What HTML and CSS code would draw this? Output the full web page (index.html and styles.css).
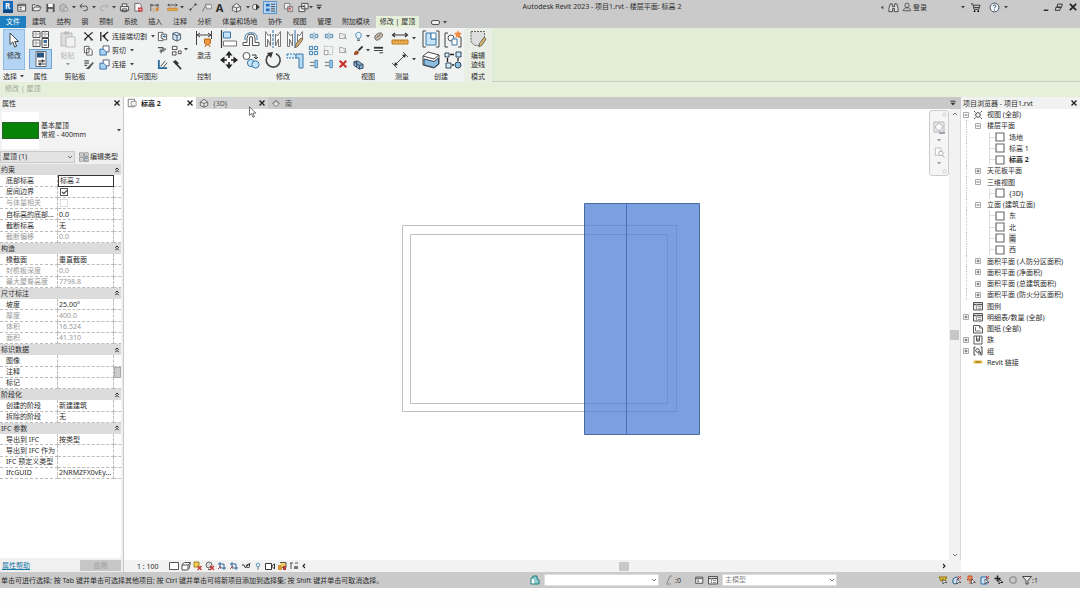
FILE: index.html
```html
<!DOCTYPE html>
<html lang="zh-CN">
<head>
<meta charset="utf-8">
<title>Autodesk Revit 2023 - 项目1.rvt</title>
<link rel="stylesheet" href="styles.css">
</head>
<body>
<svg class="defs" aria-hidden="true">
  <symbol id="tri" viewBox="0 0 4 3"><path d="M0 0h4L2 2.6z" fill="#444"/></symbol>
  <symbol id="x" viewBox="0 0 8 8"><path d="M1.5 1.5l5 5m0-5l-5 5" stroke="#222" stroke-width="1.4" fill="none"/></symbol>
  <symbol id="chev" viewBox="0 0 6 6"><path d="M1 2l2 2 2-2" stroke="#555" stroke-width=".8" fill="none"/></symbol>
  <symbol id="chevr" viewBox="0 0 6 6"><path d="M2 1l2 2-2 2" stroke="#222" stroke-width="1.1" fill="none"/></symbol>
  <symbol id="dbl" viewBox="0 0 6 6"><path d="M1.3 2.8L3 1l1.7 1.8M1.3 5.2L3 3.4l1.7 1.8" stroke="#222" stroke-width="1" fill="none"/></symbol>
  <symbol id="menu" viewBox="0 0 6 6"><path d="M.5 1.2h5" stroke="#333"/><path d="M.5 2.8h5L3 5.5z" fill="#333"/></symbol>
  <symbol id="win" viewBox="0 0 12 12"><path d="M2 2.5h8.500v7.500H2zM2 4h8.500M4 6h2M4 8h2" stroke="#444" fill="#eee"/></symbol>
  <symbol id="open" viewBox="0 0 12 12"><path d="M1.500 9.500V3h3l1 1h3.500v1.500M1.500 9.500l2-4h7.500l-2 4z" stroke="#444" fill="#eee" stroke-width=".9"/></symbol>
  <symbol id="save" viewBox="0 0 12 12"><path d="M1.500 2h9v9h-9z" fill="#555"/><path d="M3.500 2h5v3.500h-5z" fill="#fff"/><path d="M3.500 7.500h5V11h-5z" fill="#ccc"/></symbol>
  <symbol id="sync" viewBox="0 0 12 12"><path d="M2 4l4-2 3 2v4l-4 2.500L2 9z" stroke="#999" fill="#bbb"/><circle cx="8.500" cy="8" r="2.300" fill="#ccc" stroke="#999"/></symbol>
  <symbol id="undo" viewBox="0 0 12 12"><path d="M4.500 2L2 4.500 4.500 7M2.200 4.500H8a2.400 2.400 0 010 5H6" stroke="#444" fill="none"/></symbol>
  <symbol id="redo" viewBox="0 0 12 12"><path d="M7.500 2L10 4.500 7.500 7M9.800 4.500H4a2.400 2.400 0 000 5h2" stroke="#aaa" fill="none"/></symbol>
  <symbol id="print" viewBox="0 0 12 12"><path d="M3.500 5V2h5v3M1.500 5h9v4.500h-9zM3.500 7.500h5v3h-5z" stroke="#444" fill="#f4f4f4"/></symbol>
  <symbol id="pdf" viewBox="0 0 12 12"><path d="M2 1.500h5l2 2V10H2z" stroke="#666" fill="#f4f4f4"/><path d="M5.500 6h5v4.500h-5z" fill="#c44"/><path d="M7 8.200h2" stroke="#fff"/></symbol>
  <symbol id="dimq" viewBox="0 0 12 12"><path d="M2 2v8M10 2v4M2 3.500h8M4 2.500l-2 1 2 1M8 2.500l2 1-2 1" stroke="#555" stroke-width=".9" fill="none"/><path d="M7 6h3.500v3L8 11z" fill="#d78a3a"/><path d="M4 7l2 2-2 2" stroke="#d78a3a" fill="none"/></symbol>
  <symbol id="ruler" viewBox="0 0 18 18"><path d="M1 5h16M4 3L1.500 5 4 7M14 3l2.500 2L14 7" stroke="#333" fill="none" stroke-width="1.200"/><path d="M1 10h16v4H1z" fill="#f0b050" stroke="#b87a20"/><path d="M4 10v2m3-2v2m3-2v2m3-2v2" stroke="#a06a1c" stroke-width=".7"/></symbol>
  <symbol id="diag" viewBox="0 0 18 18"><path d="M3 15L15 3" stroke="#444"/><path d="M1 12l5 5M12 1l5 5" stroke="#555"/><path d="M3 15l1-4 3 3zM15 3l-4 1 3 3z" fill="#333"/></symbol>
  <symbol id="tag" viewBox="0 0 12 12"><path d="M1.500 10.500L5 4" stroke="#777"/><path d="M5 2.500h4.500a2 2 0 010 5H6z" stroke="#777" fill="#e8e8e8"/></symbol>
  <symbol id="house" viewBox="0 0 12 12"><path d="M1.500 5L6 1.500 10.500 5v4L6 11 1.500 9z" stroke="#555" fill="#e8e8e8"/><path d="M1.500 5L6 6.500 10.500 5M6 6.500V11" stroke="#555" fill="none"/></symbol>
  <symbol id="elev" viewBox="0 0 12 12"><path d="M1 7l5-4.500L11 7z" fill="#777"/><circle cx="6" cy="7" r="2.800" fill="#e8e8e8" stroke="#777"/></symbol>
  <symbol id="plan" viewBox="0 0 12 12"><path d="M1.500 1.500h7.500v9H1.500z" fill="#fff" stroke="#666"/><path d="M5 4h6v5.500H5z" fill="#f4f4f4" stroke="#888"/></symbol>
  <symbol id="sect" viewBox="0 0 12 12"><circle cx="5" cy="6" r="3.200" fill="#eee" stroke="#555"/><path d="M6 2l4.500 4L6 10z" fill="#333"/></symbol>
  <symbol id="thin" viewBox="0 0 12 12"><path d="M1 2h4v3H1zM1 7h4v3H1z" fill="#2d6fb5"/><path d="M6.500 2.500H11M6.500 5H11M6.500 7.500H11M6.500 10H11" stroke="#333" stroke-width=".9"/></symbol>
  <symbol id="closew" viewBox="0 0 12 12"><path d="M1.500 1.500h6v6h-6zM5 5h5.500v5.500H5z" stroke="#777" fill="#eee"/><path d="M5.500 6l4 4m0-4l-4 4" stroke="#c44"/></symbol>
  <symbol id="switch" viewBox="0 0 12 12"><path d="M4 1.500h7v6H4zM1 5h6.500v5.500H1z" stroke="#444" fill="#eee"/><path d="M5 5l3-2" stroke="#444"/></symbol>
  <symbol id="bino" viewBox="0 0 12 12"><path d="M2.500 2h2.200v3h2.600V2h2.200L11 7v3.500H7V7H5v3.500H1V7z" stroke="#333" fill="#ddd" stroke-width=".9"/></symbol>
  <symbol id="user" viewBox="0 0 12 12"><circle cx="6" cy="4" r="2.600" stroke="#444" fill="none"/><path d="M1.500 10.500c.500-3 2-3.500 4.500-3.500s4 .5 4.500 3.500z" stroke="#444" fill="none"/></symbol>
  <symbol id="cart" viewBox="0 0 12 12"><path d="M1 2h2l1.500 6h5L11 3.500H3.500M4.500 6h5.500" stroke="#333" fill="none"/><circle cx="5" cy="10" r="1"/><circle cx="9" cy="10" r="1"/></symbol>
  <symbol id="help" viewBox="0 0 12 12"><circle cx="6" cy="6" r="4.800" fill="#f2f7fb" stroke="#345"/><path d="M4.500 4.600c.2-2 3.200-1.700 3 0C7.300 5.700 6 5.700 6 7M6 8.300v1" stroke="#246" fill="none"/></symbol>
  <symbol id="min" viewBox="0 0 12 12"><path d="M3 9h5" stroke="#222" stroke-width="1.500"/></symbol>
  <symbol id="rest" viewBox="0 0 12 12"><path d="M4.500 2.500H10l-1 4H3.500zM2.500 6H8l-1 4H1.500z" stroke="#222" fill="#ccc"/></symbol>
  <symbol id="arrow" viewBox="0 0 12 16"><path d="M2 1v11.500l2.800-2.600L6.700 15l2-.8-2-4.700H10.500z" fill="#fff" stroke="#444"/></symbol>
  <symbol id="props" viewBox="0 0 18 18"><path d="M1 1.500h7v6H1zM10 1.500h6.500v6H10zM1 10h7v6.500H1z" stroke="#555" fill="#f8f8f8"/><path d="M1 4h7M4 1.500v6M10 4h6M13 1.500v6M1 13h7M4 10v6" stroke="#aaa"/><path d="M10 8.500h6.500v9H10z" fill="#fff" stroke="#444"/><path d="M11.500 10h3.500v3h-3.500z" fill="#3c6b9e"/><path d="M11.500 15h3.500" stroke="#444"/></symbol>
  <symbol id="panel" viewBox="0 0 18 18"><path d="M4 1.500h10v15H4z" stroke="#667" fill="#fff"/><path d="M5 2.500h7v5H5z" fill="#28557f"/><path d="M6 11h7M6 14h7" stroke="#333"/><path d="M10.500 9.500v3M8 12.500v3" stroke="#333" stroke-width="1.500"/></symbol>
  <symbol id="paste" viewBox="0 0 18 18"><path d="M2 3h11v13H2z" fill="#ddd" stroke="#bbb"/><path d="M5 1.500h5v3H5z" fill="#bbb"/><path d="M7 7h9v10H7z" fill="#f2f2f2" stroke="#bbb"/></symbol>
  <symbol id="cut" viewBox="0 0 12 12"><path d="M2 2l7.500 7M9.500 2L2 9" stroke="#222" stroke-width="1.300"/><path d="M1 9.500h2.500M8 9.500h3M1 2h2M9 2h2" stroke="#555" stroke-width="1.500"/></symbol>
  <symbol id="copy" viewBox="0 0 12 12"><path d="M1.500 1.500h5v7h-5zM4 4h4l2 2v5H4z" fill="#fff" stroke="#555"/></symbol>
  <symbol id="match" viewBox="0 0 12 12"><path d="M1.500 2h5M1.500 4.500h5M1.500 7h3" stroke="#555" stroke-width="1.300"/><path d="M11 3L6 8l-3 3h4l1.500-2.500L11.500 5z" fill="#555"/></symbol>
  <symbol id="cope" viewBox="0 0 12 12"><path d="M2 1v10M10 1L4.500 5.500 10 11M3.500 5.500H7" stroke="#222" fill="none" stroke-width="1.400"/></symbol>
  <symbol id="join" viewBox="0 0 12 12"><path d="M4.500 1h6.500v6.500H4.500z" fill="#fff" stroke="#557"/><path d="M1 4.500h4l3 3V11H1z" fill="#a9d2f1" stroke="#2b6ca5"/></symbol>
  <symbol id="wall" viewBox="0 0 12 12"><path d="M1.500 1.500h5V4h-2v4h2v2.500h-5zM7 3.500h3.500v6H7" fill="#fff" stroke="#555"/><path d="M6 6h3.500M8 4.500L9.500 6 8 7.500" fill="none" stroke="#27699e"/></symbol>
  <symbol id="cube" viewBox="0 0 12 12"><path d="M2 2.500l4-1 4.500 2v5.500L6.500 11 2 9z" fill="#cfe3f4" stroke="#456"/><path d="M2 3l4.500 2.200 4-1.700M6.500 5.200V11" fill="none" stroke="#456"/></symbol>
  <symbol id="beam" viewBox="0 0 12 12"><path d="M1 3h6v2h4M5 5v5M3 7h6" stroke="#555" stroke-width="1.500" fill="none"/></symbol>
  <symbol id="chain" viewBox="0 0 12 12"><path d="M1.500 1.500h5v3.500h-5zM1.500 7.500h4V11h-4zM8 6.500h3v3H8z" stroke="#444" fill="#fff"/></symbol>
  <symbol id="split" viewBox="0 0 12 12"><path d="M2 1v9h9" stroke="#27699e" stroke-width="2" fill="none"/><path d="M4 8l5-6M7 9l4-5" stroke="#444"/></symbol>
  <symbol id="hammer" viewBox="0 0 12 12"><path d="M2 3l3-2 3.500 3.500L6 7z" fill="#333"/><path d="M6 5.500l5 5.500" stroke="#333" stroke-width="1.800"/></symbol>
  <symbol id="act" viewBox="0 0 18 18"><path d="M1.500 1v14M16.500 1v8M2 5h14M5 3L2 5l3 2M13 3l3 2-3 2" stroke="#444" fill="none"/><path d="M9.500 9h6v4l-2 2h-2l-2-2z" fill="#ef9b42" stroke="#b8641b"/><path d="M11 15l-1 2M14 15l1 2" stroke="#b8641b"/></symbol>
  <symbol id="align" viewBox="0 0 18 18"><path d="M1.500 0v18" stroke="#333" stroke-width="1.200"/><path d="M3.500 2h7v6h-7z" fill="#c6e5fa" stroke="#3978a8"/><path d="M3.500 11h13v5h-13z" fill="#fff" stroke="#777"/></symbol>
  <symbol id="offset" viewBox="0 0 18 18"><path d="M1 15.500v-3h4V8a4 4 0 018 0v4.500h4v3h-6.500V8a1.500 1.500 0 00-3 0v7.500z" fill="#fff" stroke="#555"/><path d="M3 10V6.500C4 1.500 14 1.500 15 6.500V10" fill="none" stroke="#3978a8"/></symbol>
  <symbol id="mir1" viewBox="0 0 18 18"><path d="M9 0v18" stroke="#2b6ca5" stroke-dasharray="3 1"/><path d="M1.500 1.500v15h2V9l3 7V4l-2 2zM16.500 1.500v15h-2V9l-3 7V4l2 2z" fill="#fff" stroke="#777"/></symbol>
  <symbol id="mir2" viewBox="0 0 18 18"><path d="M9 0v18" stroke="#2b6ca5"/><path d="M1.500 1.500v15h2V9l3 7V4l-2 2zM16.500 1.500V9l-5 3V4l2 2z" fill="#fff" stroke="#777"/><path d="M17 9l-5 7-3 2 1-4 5-6z" fill="#d9b36c" stroke="#765"/></symbol>
  <symbol id="move" viewBox="0 0 18 18"><path d="M9 3v12M3 9h12" stroke="#222" stroke-width="1.600"/><path d="M9 0l3.500 4.500h-7zM9 18l-3.500-4.500h7zM0 9l4.500-3.500v7zM18 9l-4.500 3.500v-7z" fill="#222"/><path d="M7 7h4v4H7z" fill="#fff"/></symbol>
  <symbol id="copy2" viewBox="0 0 18 18"><circle cx="4.500" cy="5" r="3.500" fill="#fff" stroke="#555"/><path d="M10 4h4v3M12 6l2 2 2-2" stroke="#333" fill="none"/><circle cx="9" cy="12" r="3.600" fill="#c6e5fa" stroke="#3978a8"/><circle cx="13.500" cy="13.500" r="3.600" fill="#c6e5fa" stroke="#3978a8"/></symbol>
  <symbol id="rot" viewBox="0 0 18 18"><path d="M5 3.500a7 7 0 107-.8" stroke="#444" stroke-width="1.600" fill="none"/><path d="M3 2l6-1-2 6z" fill="#333"/></symbol>
  <symbol id="trim" viewBox="0 0 18 18"><path d="M1 3h9v4H1z" fill="#d9eefc" stroke="#3978a8" stroke-dasharray="2 1"/><path d="M10 3h7v14h-4V7h-3z" fill="#b8dcf5" stroke="#3978a8"/></symbol>
  <symbol id="sp1" viewBox="0 0 12 12"><path d="M5 4H1.500v4H5M7 4h3.500v4H7M3 6h6M6 2v2M6 8v2" stroke="#3978a8" fill="none"/></symbol>
  <symbol id="arr" viewBox="0 0 12 12"><path d="M1.500 1.500h3.500V5H1.500zM7 1.500h3.500V5H7zM1.500 7h3.500v3.500H1.500zM7 7h3.500v3.500H7z" fill="#d9eefc" stroke="#3978a8"/></symbol>
  <symbol id="scale" viewBox="0 0 12 12"><path d="M1.500 1.500h9v9h-9z" stroke="#aaa" stroke-dasharray="1.500 1" fill="none"/><path d="M1.500 6h4v4.500h-4z" fill="#fff" stroke="#999"/></symbol>
  <symbol id="ext" viewBox="0 0 12 12"><path d="M1 4h5M1 8h5" stroke="#555"/><path d="M7 1.500v9h3v-9z" fill="#a9d2f1" stroke="#3978a8"/></symbol>
  <symbol id="pin" viewBox="0 0 12 12"><path d="M2 3h3l1 1h3v5H2zM7 6l3 4" stroke="#999" fill="#eee"/></symbol>
  <symbol id="del" viewBox="0 0 12 12"><path d="M2 2l8 8m0-8l-8 8" stroke="#c93030" stroke-width="2.500"/></symbol>
  <symbol id="bulb" viewBox="0 0 12 12"><path d="M4.500 8C2 5 3 1.500 6 1.500S10 5 7.500 8z" fill="#e8f5ff" stroke="#3978a8"/><path d="M4.500 10h3" stroke="#555" stroke-width="1.500"/></symbol>
  <symbol id="brush" viewBox="0 0 12 12"><path d="M10.500 1.500L6 6" stroke="#333" stroke-width="2"/><path d="M1 11c0-4 2-5 4-5l1.500 1.500C6.500 10 4 11 1 11z" fill="#a4552a"/></symbol>
  <symbol id="over" viewBox="0 0 12 12"><path d="M2 6.500C2 4 7 1 9.500 2.500S9 8 6 9.500 2 9 2 6.500z" fill="#c9bba9" stroke="#555"/><path d="M4 7l4-3" stroke="#555" fill="none"/></symbol>
  <symbol id="lines" viewBox="0 0 12 12"><path d="M1 3h10" stroke="#333" stroke-width="2"/><path d="M1 6h10M7 8.500h4" stroke="#333"/></symbol>
  <symbol id="blocks" viewBox="0 0 12 12"><path d="M1 3l4-1 6 4v4l-4 1-6-4z" fill="#86b3d8" stroke="#345"/><path d="M1 3l6 4 4-1M7 7v4M4 2v7" stroke="#345" fill="none"/></symbol>
  <symbol id="grp" viewBox="0 0 18 18"><path d="M4 1H1v16h3M14 1h3v16h-3" stroke="#444" fill="none"/><path d="M4 3h5v6h5v6H4z" fill="#c6e5fa" stroke="#3978a8"/><path d="M9 3h5v6H9z" fill="#fff" stroke="#3978a8"/></symbol>
  <symbol id="sim" viewBox="0 0 18 18"><path d="M4 3H1v14h3M14 7h3v10h-3" stroke="#444" fill="none"/><circle cx="7" cy="8" r="3" fill="#fff" stroke="#555"/><path d="M8 9h5v6H8z" fill="#fff" stroke="#3978a8"/><path d="M14 0l1 2.500L18 3l-2 2 .5 3L14 6.500 11.500 8 12 5l-2-2 3-.5z" fill="#ee8a3d"/></symbol>
  <symbol id="asm" viewBox="0 0 18 18"><path d="M1 5l5-4 11 3v9l-5 4-11-3z" fill="#fff" stroke="#444"/><path d="M2 8l10 2.500 4.500-3.500v6L12 16.500 2 14z" fill="#8bbce2" stroke="#345"/><path d="M1 5l11 3 5-4" stroke="#444" fill="none"/></symbol>
  <symbol id="fam" viewBox="0 0 18 18"><path d="M1 2h4v4H1zM2 12h5v5H2z" fill="#d9eefc" stroke="#345"/><path d="M12 1h5v5h-5z" fill="#c6e5fa" stroke="#345"/><circle cx="14" cy="14" r="3" fill="#8bbce2" stroke="#345"/><path d="M6 3.500h4M3.500 7v4M14 7v3M8 14h2" stroke="#222" stroke-width="1.300"/></symbol>
  <symbol id="edit" viewBox="0 0 18 18"><path d="M2 1.500h13.500V11L11 15.500H6L2 12z" fill="#ddd" stroke="#666" stroke-dasharray="2 1"/><path d="M17 9l-4 6-3 2 .5-3.500 4.500-6z" fill="#dfbb72" stroke="#665"/></symbol>
  <symbol id="wheel" viewBox="0 0 14 14"><path d="M2 1h10v10H2z" fill="#eee" stroke="#777"/><circle cx="7" cy="6" r="3.500" fill="#fff" stroke="#777"/><path d="M7 11h6v2H7z" fill="#557"/></symbol>
  <symbol id="zoomr" viewBox="0 0 12 12"><path d="M1.500 1h6v8h-6z" fill="#fff" stroke="#888"/><circle cx="7.500" cy="7" r="2.500" fill="#fff" stroke="#666"/><path d="M9 9l2.500 2.500" stroke="#555"/></symbol>
  <symbol id="sheet" viewBox="0 0 10 10"><path d="M1 1h8v8H1z" fill="#fff" stroke="#666" stroke-width="1.100"/><path d="M1 3h1M1 5h1M1 7h1" stroke="#999"/></symbol>
  <symbol id="views" viewBox="0 0 10 10"><path d="M1 1l1.500 1.500M9 1L7.500 2.500M1 9l1.500-1.500M9 9L7.500 7.500" stroke="#444"/><circle cx="5" cy="5" r="2.300" fill="#fff" stroke="#444"/></symbol>
  <symbol id="tbl" viewBox="0 0 10 10"><path d="M.5 1.500h9v7.500h-9z" fill="#eee" stroke="#555"/><path d="M1 3.500h8" stroke="#555" stroke-width="1.300"/><path d="M3.500 3v6M5 5.500h3M5 7.500h3" stroke="#999"/></symbol>
  <symbol id="page" viewBox="0 0 10 10"><path d="M.5 1.500h6l3 2.500v5h-9z" fill="#fff" stroke="#555"/><path d="M2.500 3v4h5M6.500 1.500V4h3" stroke="#777" fill="none"/></symbol>
  <symbol id="famt" viewBox="0 0 10 10"><path d="M1 1h8v8H1z" fill="#fff" stroke="#555"/><path d="M3.500 1v5h3V1M5 3v3" stroke="#555" fill="none"/></symbol>
  <symbol id="grpt" viewBox="0 0 10 10"><path d="M2.500 1H1v8h1.500M7.500 1H9v8H7.500" stroke="#444" fill="none"/><circle cx="4.500" cy="4.500" r="1.800" fill="#fff" stroke="#444"/><path d="M5 6h2.500v2H5" stroke="#444" fill="none"/></symbol>
  <symbol id="link" viewBox="0 0 10 10"><path d="M2 5h6" stroke="#e0b13a" stroke-width="3" stroke-linecap="round"/><path d="M3 5h4" stroke="#8b6816"/></symbol>
  <symbol id="plus" viewBox="0 0 6 6"><path d="M.5.500h5v5h-5z" fill="#fff" stroke="#aaa"/><path d="M1.500 3h3M3 1.500v3" stroke="#444" stroke-width=".8"/></symbol>
  <symbol id="minus" viewBox="0 0 6 6"><path d="M.5.500h5v5h-5z" fill="#fff" stroke="#aaa"/><path d="M1.500 3h3" stroke="#444" stroke-width=".8"/></symbol>
  <symbol id="s-box" viewBox="0 0 10 10"><path d="M.5 1.500h9v7h-9z" fill="#fff" stroke="#555"/></symbol>
  <symbol id="s-cube" viewBox="0 0 10 10"><path d="M1 3.500L3.500 1.500h6L8 7.500 6.500 9H1z" fill="#fff" stroke="#555"/><path d="M1 4h6l2-2M7 4v5" stroke="#555" fill="none"/></symbol>
  <symbol id="s-sun" viewBox="0 0 10 10"><path d="M1 1h5v5H1z" fill="#f2cf5b" stroke="#a78320"/><path d="M4.500 5l4 4m0-4l-4 4" stroke="#c33" stroke-width="1.300"/></symbol>
  <symbol id="s-shade" viewBox="0 0 10 10"><circle cx="4" cy="4" r="3" fill="#ddd" stroke="#666"/><path d="M3 8.500h3" stroke="#555"/><path d="M5 5l4 4m0-4L5 9" stroke="#c33" stroke-width="1.300"/></symbol>
  <symbol id="s-crop" viewBox="0 0 10 10"><path d="M3 1v6h6M1 3h6v6" stroke="#356b98" fill="#cfe3f4"/><path d="M1 8l3-3" stroke="#b33"/></symbol>
  <symbol id="s-glass" viewBox="0 0 10 10"><path d="M1 4h2l1.500 3L8 2.500M8 5l1-3" stroke="#333" fill="none"/><circle cx="7" cy="5" r="1.700" fill="none" stroke="#555"/></symbol>
  <symbol id="s-lamp" viewBox="0 0 10 10"><circle cx="5" cy="4" r="1.800" fill="#d9eefc" stroke="#6a9dc2"/><path d="M5 6v3" stroke="#777"/></symbol>
  <symbol id="s-cam" viewBox="0 0 10 10"><path d="M.5 2.500h6v6h-6zM6.500 5l3-2v5z" fill="#fff" stroke="#333"/></symbol>
  <symbol id="s-color" viewBox="0 0 10 10"><path d="M1 4h4v5H1z" fill="#d99332"/><path d="M3 1.500h6v5H5" fill="#f2cf5b" stroke="#555"/><path d="M6 5h3v4H6z" fill="#b33b3b"/></symbol>
  <symbol id="s-con" viewBox="0 0 10 10"><path d="M1 2h3M6 2h3M2 2v6M8 5v3" stroke="#555"/><path d="M5 5h4v3H5z" fill="#777"/></symbol>
  <symbol id="t-work" viewBox="0 0 10 10"><path d="M1 3h4v6H1z" fill="#fff" stroke="#187d80"/><path d="M3 3V1h4v3l2 1v4H5" fill="#91cfd0" stroke="#187d80"/></symbol>
  <symbol id="t-req" viewBox="0 0 10 10"><path d="M1 9h5M2 8L5 1h2" stroke="#888" fill="none"/></symbol>
  <symbol id="t-link" viewBox="0 0 10 10"><path d="M1 2h8l-2 4H3z" fill="#d9b62f" stroke="#8d7413"/><path d="M5 4v5l1.500-1.500H9z" fill="#fff" stroke="#333" stroke-width=".7"/></symbol>
  <symbol id="t-under" viewBox="0 0 10 10"><path d="M1 4l3-2 2 1v5l-3 1-2-1z" fill="#cfe3f4" stroke="#2b5c8a"/><path d="M6 1l3 3m0-3L6 4" stroke="#c33"/><path d="M5 4v5l1.500-1.500H9z" fill="#fff" stroke="#333" stroke-width=".7"/></symbol>
  <symbol id="t-face" viewBox="0 0 10 10"><path d="M1 2h6v7H1z" fill="#cfe3f4" stroke="#2b6ca5"/><path d="M6 1l3 3m0-3L6 4" stroke="#c33"/><path d="M5 4v5l1.500-1.500H9z" fill="#fff" stroke="#333" stroke-width=".7"/></symbol>
  <symbol id="t-pin" viewBox="0 0 10 10"><path d="M2 1h4v3l1 1H1l1-1zM4 5v4" fill="#ef8e61" stroke="#c3522a"/><path d="M5.500 4v5L7 7.500h2.500z" fill="#fff" stroke="#333" stroke-width=".7"/></symbol>
  <symbol id="t-drag" viewBox="0 0 10 10"><path d="M3.500.5v6M.5 3.500h6" stroke="#222" stroke-width="1.500"/><path d="M5 4v5l1.500-1.500H9z" fill="#fff" stroke="#222"/></symbol>
  <symbol id="t-gear" viewBox="0 0 10 10"><circle cx="5" cy="5" r="3.200" fill="none" stroke="#999" stroke-width="1.600"/></symbol>
  <symbol id="t-filt" viewBox="0 0 10 10"><path d="M.5 1.500h9L6 5.500V9H4V5.500z" fill="#e5e5e5" stroke="#444"/></symbol>
</svg>

<div class="app">
  <header class="title">
    <div class="quick">
      <button class="logo" aria-label="Revit">R</button>
      <button aria-label="主页"><svg class="i12"><use href="#win"/></svg></button>
      <button aria-label="打开"><svg class="i12"><use href="#open"/></svg></button>
      <button aria-label="保存"><svg class="i12"><use href="#save"/></svg></button>
      <button aria-label="同步"><svg class="i12"><use href="#sync"/></svg></button>
      <svg class="tri"><use href="#tri"/></svg>
      <button aria-label="放弃"><svg class="i12"><use href="#undo"/></svg></button>
      <svg class="tri"><use href="#tri"/></svg>
      <button aria-label="重做"><svg class="i12"><use href="#redo"/></svg></button>
      <svg class="tri"><use href="#tri"/></svg>
      <button aria-label="打印"><svg class="i12"><use href="#print"/></svg></button>
      <button aria-label="导出"><svg class="i12"><use href="#pdf"/></svg></button>
      <button aria-label="尺寸"><svg class="i12"><use href="#dimq"/></svg></button>
      <button aria-label="测量工具"><svg class="i12"><use href="#ruler"/></svg></button>
      <svg class="tri"><use href="#tri"/></svg>
      <button aria-label="对齐标注"><svg class="i10"><use href="#diag"/></svg></button>
      <button aria-label="标记"><svg class="i12"><use href="#tag"/></svg></button>
      <button class="letter" aria-label="文字">A</button>
      <button aria-label="三维"><svg class="i12"><use href="#house"/></svg></button>
      <svg class="tri"><use href="#tri"/></svg>
      <button aria-label="剖面"><svg class="i10"><use href="#sect"/></svg></button>
      <button class="on" aria-label="细线"><svg class="i12"><use href="#thin"/></svg></button>
      <button aria-label="关闭非活动视图"><svg class="i12"><use href="#closew"/></svg></button>
      <button aria-label="切换窗口"><svg class="i12"><use href="#switch"/></svg></button>
      <svg class="tri"><use href="#tri"/></svg>
      <svg class="i6"><use href="#menu"/></svg>
    </div>
    <h1>Autodesk Revit 2023 - 项目1.rvt - 楼层平面: 标高 2</h1>
    <div class="account">
      <svg class="tri side"><use href="#tri"/></svg>
      <button aria-label="搜索"><svg class="i12"><use href="#bino"/></svg></button>
      <button class="login"><svg class="i10"><use href="#user"/></svg>登录</button>
      <svg class="tri"><use href="#tri"/></svg>
      <button aria-label="商店"><svg class="i12"><use href="#cart"/></svg></button>
      <button aria-label="帮助"><svg class="i12"><use href="#help"/></svg></button>
      <svg class="tri"><use href="#tri"/></svg>
      <button class="minimize" aria-label="最小化"><svg class="i12"><use href="#min"/></svg></button>
      <button aria-label="还原"><svg class="i10"><use href="#rest"/></svg></button>
      <button aria-label="关闭"><svg class="i10"><use href="#x"/></svg></button>
    </div>
  </header>

  <nav class="tabs">
    <button class="file">文件</button>
    <div class="tablist">
      <button>建筑</button><button>结构</button><button>钢</button><button>预制</button><button>系统</button><button>插入</button><button>注释</button><button>分析</button><button>体量和场地</button><button>协作</button><button>视图</button><button>管理</button><button>附加模块</button>
    </div>
    <button class="active">修改 | 屋顶</button>
    <button class="cycle" aria-label="功能区显示"><span class="pill"></span><svg class="tri"><use href="#tri"/></svg></button>
  </nav>

  <section class="ribbon">
    <div class="panel"><div class="body"><button class="modify"><svg class="i16"><use href="#arrow"/></svg>修改</button></div><p>选择 <svg class="tri"><use href="#tri"/></svg></p></div>
    <div class="panel"><div class="body two"><button aria-label="类型属性"><svg class="i18"><use href="#props"/></svg></button><button class="on" aria-label="属性"><svg class="i18"><use href="#panel"/></svg></button></div><p>属性</p></div>
    <div class="panel"><div class="body clip">
      <button class="tall off"><svg class="i18"><use href="#paste"/></svg>粘贴<svg class="tri"><use href="#tri"/></svg></button>
      <div class="col"><button aria-label="剪切"><svg class="i12"><use href="#cut"/></svg></button><button aria-label="复制"><svg class="i12"><use href="#copy"/></svg></button><button aria-label="匹配"><svg class="i12"><use href="#match"/></svg></button></div>
    </div><p>剪贴板</p></div>
    <div class="panel"><div class="body geo">
      <div class="col wide"><button><svg class="i12"><use href="#cope"/></svg>连接端切割<svg class="tri"><use href="#tri"/></svg></button><button><svg class="i12"><use href="#join"/></svg>剪切<svg class="tri"><use href="#tri"/></svg></button><button><svg class="i12"><use href="#join"/></svg>连接<svg class="tri"><use href="#tri"/></svg></button></div>
      <div class="col"><button aria-label="墙连接"><svg class="i12"><use href="#wall"/></svg></button><button aria-label="梁连接"><svg class="i10"><use href="#beam"/></svg></button><button aria-label="拆分面"><svg class="i12"><use href="#split"/></svg></button></div>
      <div class="col"><button aria-label="填色"><svg class="i12"><use href="#cube"/></svg></button><button aria-label="链"><svg class="i12"><use href="#chain"/></svg></button><button aria-label="拆除"><svg class="i12"><use href="#hammer"/></svg></button></div>
      <svg class="tri"><use href="#tri"/></svg>
    </div><p>几何图形</p></div>
    <div class="panel"><div class="body one"><button class="tall"><svg class="i18"><use href="#act"/></svg>激活</button></div><p>控制</p></div>
    <div class="panel"><div class="body mod">
      <div class="big"><button aria-label="对齐"><svg class="i18"><use href="#align"/></svg></button><button aria-label="偏移"><svg class="i18"><use href="#offset"/></svg></button><button aria-label="镜像拾取轴"><svg class="i18"><use href="#mir1"/></svg></button><button aria-label="镜像绘制轴"><svg class="i18"><use href="#mir2"/></svg></button><button aria-label="移动"><svg class="i18"><use href="#move"/></svg></button><button aria-label="复制"><svg class="i18"><use href="#copy2"/></svg></button><button aria-label="旋转"><svg class="i18"><use href="#rot"/></svg></button><button aria-label="修剪"><svg class="i18"><use href="#trim"/></svg></button></div>
      <div class="small"><button aria-label="拆分"><svg class="i10"><use href="#sp1"/></svg></button><button aria-label="间隙拆分"><svg class="i10"><use href="#sp1"/></svg></button><button aria-label="解锁"><svg class="i10"><use href="#pin"/></svg></button><button aria-label="阵列"><svg class="i12"><use href="#arr"/></svg></button><button aria-label="缩放"><svg class="i12"><use href="#scale"/></svg></button><button aria-label="锁定"><svg class="i10"><use href="#pin"/></svg></button><button aria-label="延伸"><svg class="i10"><use href="#ext"/></svg></button><button aria-label="延伸多个"><svg class="i10"><use href="#ext"/></svg></button><button aria-label="删除"><svg class="i10"><use href="#del"/></svg></button></div>
    </div><p>修改</p></div>
    <div class="panel"><div class="body view"><button aria-label="隐藏"><svg class="i12"><use href="#bulb"/></svg></button><svg class="tri"><use href="#tri"/></svg><button aria-label="替换"><svg class="i12"><use href="#over"/></svg></button><button aria-label="画笔"><svg class="i12"><use href="#brush"/></svg></button><svg class="tri"><use href="#tri"/></svg><button aria-label="线处理"><svg class="i12"><use href="#lines"/></svg></button><button aria-label="选择框"><svg class="i12"><use href="#blocks"/></svg></button></div><p>视图</p></div>
    <div class="panel"><div class="body meas"><button aria-label="测量"><svg class="i18"><use href="#ruler"/></svg></button><svg class="tri"><use href="#tri"/></svg><button aria-label="尺寸标注"><svg class="i18"><use href="#diag"/></svg></button><svg class="tri"><use href="#tri"/></svg></div><p>测量</p></div>
    <div class="panel"><div class="body make"><button aria-label="创建组"><svg class="i18"><use href="#grp"/></svg></button><button aria-label="创建类似"><svg class="i18"><use href="#sim"/></svg></button><button aria-label="部件"><svg class="i18"><use href="#asm"/></svg></button><button aria-label="零件"><svg class="i18"><use href="#fam"/></svg></button></div><p>创建</p></div>
    <div class="panel mode"><div class="body one"><button class="tall"><svg class="i18"><use href="#edit"/></svg><span>编辑<br>迹线</span></button></div><p>模式</p></div>
  </section>
  <div class="options">修改 | 屋顶</div>

  <main>
    <aside class="props">
      <div class="head"><span>属性</span><button aria-label="关闭属性"><svg class="i8"><use href="#x"/></svg></button></div>
      <button class="type"><span class="swatch"><span></span></span><span>基本屋顶<br>常规 - 400mm</span><svg class="tri"><use href="#tri"/></svg></button>
      <div class="filter"><span class="pick"><select aria-label="类别"><option>屋顶 (1)</option></select><svg class="i6"><use href="#chev"/></svg></span><button><svg class="i10"><use href="#props"/></svg>编辑类型</button></div>
      <div class="sheet">
        <table>
          <tr class="sec"><th colspan="2">约束</th><td><svg class="i6"><use href="#dbl"/></svg></td></tr>
          <tr><th><label for="base">底部标高</label></th><td class="edit"><input id="base" value="标高 2"></td><td></td></tr>
          <tr><th><label for="room">房间边界</label></th><td><input id="room" type="checkbox" checked></td><td></td></tr>
          <tr class="ro"><th><label for="mass">与体量相关</label></th><td><input id="mass" type="checkbox" disabled></td><td></td></tr>
          <tr><th>自标高的底部...</th><td>0.0</td><td></td></tr>
          <tr><th>截断标高</th><td>无</td><td></td></tr>
          <tr class="ro"><th>截断偏移</th><td>0.0</td><td></td></tr>
          <tr class="sec"><th colspan="2">构造</th><td><svg class="i6"><use href="#dbl"/></svg></td></tr>
          <tr><th>椽截面</th><td>垂直截面</td><td></td></tr>
          <tr class="ro"><th>封檐板深度</th><td>0.0</td><td></td></tr>
          <tr class="ro"><th>最大屋脊高度</th><td>7798.8</td><td></td></tr>
          <tr class="sec"><th colspan="2">尺寸标注</th><td><svg class="i6"><use href="#dbl"/></svg></td></tr>
          <tr><th>坡度</th><td>25.00°</td><td></td></tr>
          <tr class="ro"><th>厚度</th><td>400.0</td><td></td></tr>
          <tr class="ro"><th>体积</th><td>16.524</td><td></td></tr>
          <tr class="ro"><th>面积</th><td>41.310</td><td></td></tr>
          <tr class="sec"><th colspan="2">标识数据</th><td><svg class="i6"><use href="#dbl"/></svg></td></tr>
          <tr><th>图像</th><td></td><td></td></tr>
          <tr><th>注释</th><td></td><td class="grip"></td></tr>
          <tr><th>标记</th><td></td><td></td></tr>
          <tr class="sec"><th colspan="2">阶段化</th><td><svg class="i6"><use href="#dbl"/></svg></td></tr>
          <tr><th>创建的阶段</th><td>新建建筑</td><td></td></tr>
          <tr><th>拆除的阶段</th><td>无</td><td></td></tr>
          <tr class="sec"><th colspan="2">IFC 参数</th><td><svg class="i6"><use href="#dbl"/></svg></td></tr>
          <tr><th>导出到 IFC</th><td>按类型</td><td></td></tr>
          <tr><th>导出到 IFC 作为</th><td></td><td></td></tr>
          <tr><th>IFC 预定义类型</th><td></td><td></td></tr>
          <tr><th>IfcGUID</th><td>2NRMZFX0vEy...</td><td></td></tr>
        </table>
      </div>
      <div class="foot"><a href="#help-props">属性帮助</a><button disabled>应用</button></div>
    </aside>

    <section class="work">
      <div class="docs">
        <div class="doc current"><svg class="i10"><use href="#plan"/></svg><button>标高 2</button><button class="close" aria-label="关闭标高 2"><svg class="i8"><use href="#x"/></svg></button></div>
        <div class="doc"><svg class="i10"><use href="#house"/></svg><button>{3D}</button><button class="close" aria-label="关闭三维"><svg class="i8"><use href="#x"/></svg></button></div>
        <div class="doc last"><svg class="i10"><use href="#elev"/></svg><button>南</button></div>
        <svg class="i6 more"><use href="#menu"/></svg>
      </div>
      <div class="stage">
        <svg class="drawing" viewBox="0 0 825 451">
          <path d="M278.500 116.500h274v186h-274zM286.500 125.500h257v169h-257z" fill="none" stroke="#c0c0c2"/>
          <path d="M460.500 94.500h115v231h-115z" fill="#7b9fe1" stroke="#4b6c9f"/>
          <path d="M461 116.500h91.500v186H461M461 125.500h82.500v169H461" fill="none" stroke="#6d90ce"/>
          <path d="M502.500 95v230" stroke="#456fba"/>
        </svg>
        <div class="navbar"><svg class="i4"><use href="#t-gear"/></svg><svg class="i14"><use href="#wheel"/></svg><svg class="tri"><use href="#tri"/></svg><svg class="i12"><use href="#zoomr"/></svg><svg class="tri"><use href="#tri"/></svg><svg class="i4"><use href="#t-gear"/></svg></div>
        <div class="vbar"><svg class="i6 flip"><use href="#chev"/></svg><span></span><svg class="i6"><use href="#chev"/></svg></div>
      </div>
      <div class="viewbar">
        <span class="scale">1 : 100</span>
        <button aria-label="详细程度"><svg class="i10"><use href="#s-box"/></svg></button><button aria-label="视觉样式"><svg class="i10"><use href="#s-cube"/></svg></button><button aria-label="日光"><svg class="i10"><use href="#s-sun"/></svg></button><button aria-label="阴影"><svg class="i10"><use href="#s-shade"/></svg></button><button aria-label="裁剪"><svg class="i10"><use href="#s-crop"/></svg></button><button aria-label="裁剪区域"><svg class="i10"><use href="#s-crop"/></svg></button><button aria-label="临时隐藏"><svg class="i10"><use href="#s-glass"/></svg></button><button aria-label="显示隐藏"><svg class="i10"><use href="#s-lamp"/></svg></button><button aria-label="视图样板"><svg class="i10"><use href="#s-cam"/></svg></button><button aria-label="分析模型"><svg class="i10"><use href="#s-color"/></svg></button><button aria-label="约束"><svg class="i10"><use href="#s-con"/></svg></button>
        <svg class="i6 flip"><use href="#chevr"/></svg>
        <div class="hbar"><span></span></div>
        <svg class="i6"><use href="#chevr"/></svg>
      </div>
      <svg class="pointer"><use href="#arrow"/></svg>
    </section>

    <aside class="browser">
      <div class="head"><span>项目浏览器 - 项目1.rvt</span><button aria-label="关闭项目浏览器"><svg class="i8"><use href="#x"/></svg></button></div>
      <ul class="tree">
        <li class="l0"><svg class="i6"><use href="#minus"/></svg><svg class="i10"><use href="#views"/></svg>视图 (全部)</li>
        <li class="l1"><svg class="i6"><use href="#minus"/></svg>楼层平面</li>
        <li class="l2"><svg class="i10"><use href="#sheet"/></svg>场地</li>
        <li class="l2"><svg class="i10"><use href="#sheet"/></svg>标高 1</li>
        <li class="l2"><svg class="i10"><use href="#sheet"/></svg><b>标高 2</b></li>
        <li class="l1"><svg class="i6"><use href="#plus"/></svg>天花板平面</li>
        <li class="l1"><svg class="i6"><use href="#minus"/></svg>三维视图</li>
        <li class="l2"><svg class="i10"><use href="#sheet"/></svg>{3D}</li>
        <li class="l1"><svg class="i6"><use href="#minus"/></svg>立面 (建筑立面)</li>
        <li class="l2"><svg class="i10"><use href="#sheet"/></svg>东</li>
        <li class="l2"><svg class="i10"><use href="#sheet"/></svg>北</li>
        <li class="l2"><svg class="i10"><use href="#sheet"/></svg><span class="sel">南</span></li>
        <li class="l2"><svg class="i10"><use href="#sheet"/></svg>西</li>
        <li class="l1"><svg class="i6"><use href="#plus"/></svg>面积平面 (人防分区面积)</li>
        <li class="l1"><svg class="i6"><use href="#plus"/></svg>面积平面 (净面积)</li>
        <li class="l1"><svg class="i6"><use href="#plus"/></svg>面积平面 (总建筑面积)</li>
        <li class="l1"><svg class="i6"><use href="#plus"/></svg>面积平面 (防火分区面积)</li>
        <li class="l0 leaf"><svg class="i10"><use href="#tbl"/></svg>图例</li>
        <li class="l0"><svg class="i6"><use href="#plus"/></svg><svg class="i10"><use href="#tbl"/></svg>明细表/数量 (全部)</li>
        <li class="l0 leaf"><svg class="i10"><use href="#page"/></svg>图纸 (全部)</li>
        <li class="l0"><svg class="i6"><use href="#plus"/></svg><svg class="i10"><use href="#famt"/></svg>族</li>
        <li class="l0"><svg class="i6"><use href="#plus"/></svg><svg class="i10"><use href="#grpt"/></svg>组</li>
        <li class="l0 leaf"><svg class="i10"><use href="#link"/></svg>Revit 链接</li>
      </ul>
    </aside>
  </main>

  <footer class="status">
    <span class="hint">单击可进行选择; 按 Tab 键并单击可选择其他项目; 按 Ctrl 键并单击可将新项目添加到选择集; 按 Shift 键并单击可取消选择。</span>
    <div class="sets">
      <svg class="i10"><use href="#t-work"/></svg>
      <span class="pick"><select aria-label="工作集"><option></option></select><svg class="i6"><use href="#chev"/></svg></span>
      <span class="req"><svg class="i10"><use href="#t-req"/></svg>:0</span>
      <svg class="i10"><use href="#win"/></svg>
      <svg class="i10"><use href="#tbl"/></svg>
      <span class="pick"><select aria-label="设计选项"><option>主模型</option></select><svg class="i6"><use href="#chev"/></svg></span>
    </div>
    <div class="toggles">
      <button aria-label="选择链接"><svg class="i10"><use href="#t-link"/></svg></button><button aria-label="选择基线图元"><svg class="i10"><use href="#t-under"/></svg></button><button aria-label="选择锁定图元"><svg class="i10"><use href="#t-pin"/></svg></button><button aria-label="按面选择"><svg class="i10"><use href="#t-face"/></svg></button><button aria-label="拖曳图元"><svg class="i10"><use href="#t-drag"/></svg></button><button aria-label="后台进程"><svg class="i10"><use href="#t-gear"/></svg></button><button class="filt"><svg class="i10"><use href="#t-filt"/></svg>:1</button>
    </div>
  </footer>
</div>
</body>
</html>
```
FILE: styles.css
```css
* { box-sizing: border-box; }
body {
  margin: 0;
  height: 100vh;
  padding-bottom: 20px;
  background: #fefefe;
  color: #2c2c2c;
  font: 7px/11px "Noto Sans", "Noto Sans CJK SC", sans-serif;
}
button, select, input { font: inherit; color: inherit; margin: 0; }
button {
  display: flex;
  align-items: center;
  justify-content: center;
  padding: 0;
  border: 0;
  background: none;
  white-space: nowrap;
}
svg { flex: none; display: block; }
.defs { display: none; }
.i4 { width: 5px; height: 5px; }
.i6 { width: 6px; height: 6px; }
.i8 { width: 8px; height: 8px; }
.i10 { width: 10px; height: 10px; }
.i12 { width: 11px; height: 11px; }
.i14 { width: 14px; height: 14px; }
.i16 { width: 14px; height: 16px; }
.i18 { width: 18px; height: 18px; }
.tri { width: 4px; height: 3px; }
.flip { transform: rotate(180deg); }

/* title bar */
.app { min-height: 100%; display: flex; flex-direction: column; }
.title { display: flex; align-items: center; height: 14px; background: #cacaca; }
.quick {
  display: grid;
  grid-template-columns: 15px 12px 18px 10px 17px 4px 15px 6px 14px 6px 14px 14px 19px 16px 4px 17px 11px 15px 19px 4px 12px 16px 20px 10px 6px 10px;
  align-items: center;
  justify-items: center;
  height: 14px;
}
.logo {
  width: 10px;
  height: 12px;
  align-items: flex-start;
  background: #1668b8;
  border-bottom: 3px solid #0c4684;
  color: #fff;
  font-size: 8px;
  font-weight: bold;
  line-height: 9px;
}
.letter { font-size: 11px; font-weight: bold; }
.title .on { width: 14px; height: 13px; background: #b5d6f4; border: 1px solid #5b94c8; }
.title h1 { flex: 1; margin: 0; text-align: center; font-size: 7px; font-weight: normal; line-height: 12px; }
.account {
  display: grid;
  grid-template-columns: 4px 18px 58px 6px 18px 20px 4px 44px 14px 14px;
  align-items: center;
  justify-items: center;
  height: 14px;
}
.side { transform: rotate(90deg); }
.login { gap: 1px; justify-self: start; }
.minimize { justify-self: end; }

/* ribbon tabs */
.tabs { display: flex; height: 14px; padding-top: 2px; background: #cacaca; line-height: 12px; }
.file { width: 26px; background: #1e7fc0; color: #fff; }
.tablist { display: flex; justify-content: space-between; width: 338px; margin-left: 6px; }
.tabs .active { width: 43px; margin-left: 6px; background: #e5efd9; }
.cycle { gap: 3px; margin-left: 12px; }
.pill { width: 9px; height: 5px; border: 1px solid #555; border-radius: 2px; background: #eee; }

/* ribbon panels */
.ribbon {
  display: grid;
  grid-template-columns: 27px 27px 42px 96px 24px 134px 36px 32px 46px 28px;
  height: 54px;
  background: #e1edd6;
  border-bottom: 1px solid #c4cfbc;
}
.panel { display: flex; flex-direction: column; background: #f1f3f2; }
.panel.mode { background: #e9efe4; }
.panel p { display: flex; align-items: center; justify-content: center; gap: 3px; margin: 0; height: 11px; }
.body { flex: 1; display: grid; }
.one { justify-content: center; }
.modify {
  flex-direction: column;
  justify-content: flex-start;
  gap: 2px;
  width: 22px;
  height: 41px;
  margin: 1px 0 0 3px;
  padding-top: 2px;
  background: #b3d5f3;
  border: 1px solid #8dbbe2;
}
.two { grid-template-rows: 21px 21px; justify-items: center; }
.two .on { width: 23px; height: 20px; background: #b3d5f3; border: 1px solid #6fa3d0; }
.clip { grid-template-columns: 27px 15px; }
.tall { flex-direction: column; justify-content: flex-start; gap: 3px; padding-top: 2px; line-height: 9px; }
.off { color: #b5b5b5; }
.off .tri { opacity: 0.5; }
.col { display: grid; grid-template-rows: repeat(3, 14px); padding-top: 1px; }
.geo { grid-template-columns: 60px 12px 16px 8px; }
.geo > .tri { align-self: center; }
.wide button { justify-content: flex-start; gap: 2px; padding-left: 3px; }
.wide .tri { margin-left: 2px; }
.mod { grid-template-columns: 88px 44px; padding-left: 2px; }
.big { display: grid; grid-template-columns: repeat(4, 22px); grid-template-rows: repeat(2, 21px); }
.small { display: grid; grid-template-columns: 15px 15px 14px; grid-template-rows: repeat(3, 14px); padding-top: 1px; }
.view { grid-template-columns: 16px 4px 16px; grid-template-rows: repeat(3, 14px); align-items: center; padding-top: 1px; }
.meas { grid-template-columns: 25px 5px; grid-template-rows: 21px 21px; align-items: center; padding-left: 1px; }
.make { grid-template-columns: 22px 22px; grid-template-rows: 21px 21px; padding-left: 2px; }
.options { height: 15px; padding-left: 5px; background: #e5efd9; color: #a1a79b; line-height: 14px; }

/* properties palette */
main { flex: 1; display: flex; min-height: 0; }
.head { display: flex; align-items: center; justify-content: space-between; height: 12px; padding: 0 2px; background: #f0f1f0; }
.props { display: flex; flex-direction: column; width: 124px; background: #f0f0f0; border-right: 1px solid #c8c8c8; }
.type { justify-content: flex-start; gap: 2px; height: 40px; padding: 2px 2px 0 2px; background: #f3f3f3; text-align: left; line-height: 9px; }
.type > .tri { margin-left: auto; }
.swatch { display: flex; align-items: center; width: 37px; height: 37px; background: #fff; }
.swatch span { flex: 1; height: 17px; background: #078407; border: 1px solid #2b5f2b; }
.filter { display: flex; align-items: center; gap: 4px; height: 15px; }
.filter button { gap: 1px; }
.pick { position: relative; display: flex; align-items: center; }
.pick select {
  appearance: none;
  width: 100%;
  height: 12px;
  padding: 0 2px;
  border: 1px solid #c9c9c9;
  border-radius: 0;
  background: #e3e3e3;
  line-height: 10px;
}
.pick svg { position: absolute; right: 2px; }
.filter .pick { width: 75px; }
.sheet { flex: 1; background: #fff; border-right: 2px solid #f0f0f0; }
table { display: grid; min-height: 315px; }
tbody { display: grid; grid-auto-rows: 1fr; }
tr { display: grid; grid-template-columns: 58px 1fr 7px; }
th, td {
  display: flex;
  align-items: center;
  padding: 0 0 0 1px;
  border: 0 dashed #bcbcbc;
  border-width: 0 1px 1px 0;
  line-height: 9px;
  font-weight: normal;
  white-space: nowrap;
  overflow: hidden;
}
th { padding-left: 6px; }
td:last-child { padding: 0; border-right: 0; }
.sec { grid-template-columns: 1fr 7px; background: #dcdcdc; }
.sec > * { border: 0; }
.sec th { padding-left: 1px; }
.ro { color: #999; }
td.edit { padding: 0; border: 1px solid #333; }
.edit input { width: 100%; height: 9px; padding: 0 0 0 1px; border: 0; background: #fff; outline: 0; }
input[type="checkbox"] { appearance: none; display: grid; place-items: center; width: 8px; height: 8px; margin-left: 1px; border: 1px solid #555; background: #fff; }
input[type="checkbox"]:disabled { border-color: #ddd; }
input[type="checkbox"]:checked::after { content: ""; width: 4px; height: 2px; border: solid #333; border-width: 0 0 1px 1px; transform: rotate(-45deg); }
td.grip { background: #ccc; border: 1px solid #aaa; }
.foot { display: flex; align-items: center; justify-content: space-between; height: 14px; padding: 0 2px; }
.foot a { color: #1878a6; }
.foot button { width: 41px; height: 11px; background: #c6c6c6; color: #999; }

/* drawing area */
.work { position: relative; flex: 1; display: flex; flex-direction: column; min-width: 0; background: #fff; }
.docs { display: flex; height: 12px; background: #c8c9c8; }
.doc { display: flex; align-items: center; gap: 4px; width: 72px; padding: 0 2px 0 3px; background: #d4d5d4; color: #555; }
.doc.current { background: #fff; color: #222; font-weight: bold; }
.doc .close { margin-left: auto; }
.doc.last { background: none; }
.more { margin: 3px 5px 0 auto; }
.stage { position: relative; flex: 1; display: flex; justify-content: flex-end; min-height: 0; }
.drawing { position: absolute; inset: 0 12px 0 0; width: calc(100% - 12px); height: 100%; }
.vbar { display: flex; flex-direction: column; align-items: center; justify-content: space-between; width: 12px; padding: 2px 1px; background: #f2f2f2; border-right: 1px solid #d8d8d8; }
.vbar span { width: 9px; height: 10px; background: #c6c6c6; }
.navbar {
  position: absolute;
  top: 1px;
  right: 12px;
  display: flex;
  flex-direction: column;
  align-items: center;
  justify-content: space-between;
  width: 20px;
  height: 66px;
  padding: 1px;
  background: #f5f5f5;
  border: 1px solid #ccc;
  border-radius: 3px;
}
.navbar svg { opacity: 0.5; }
.navbar .i4 { align-self: flex-end; }
.viewbar { display: flex; align-items: center; gap: 2px; height: 12px; padding: 0 14px 0 13px; background: #f2f2f2; }
.scale { width: 30px; }
.hbar { flex: 1; display: flex; justify-content: center; }
.hbar span { width: 10px; height: 9px; background: #c8c8c8; }
.pointer { position: absolute; left: 124px; top: 9px; width: 9px; height: 12px; }

/* project browser */
.browser { width: 119px; background: #fff; }
.tree { display: grid; grid-auto-rows: 1fr; min-height: 259px; margin: 0; padding: 0 0 0 2px; list-style: none; }
.tree li { display: flex; align-items: center; gap: 4px; white-space: nowrap; }
.tree .l1 { gap: 6px; margin-left: 3px; padding-left: 8px; border-left: 1px dotted #c5c5c5; }
.tree .l2 {
  margin-left: 3px;
  padding-left: 28px;
  border-left: 1px dotted #c5c5c5;
  background: linear-gradient(#ddd, #ddd) 22px 0 / 1px 100% no-repeat, linear-gradient(#ddd, #ddd) 22px 50% / 6px 1px no-repeat;
}
.tree .leaf { padding-left: 10px; }
.sel { background: #ddd; }

/* status bar */
.status { display: flex; align-items: center; height: 16px; background: #cacaca; white-space: nowrap; }
.hint { flex: 0 0 530px; padding-left: 1px; }
.sets { display: flex; align-items: center; gap: 4px; }
.sets .pick { width: 115px; }
.sets select { border-color: #ddd; background: #fff; color: #888; }
.req { display: flex; align-items: center; width: 25px; margin-left: 2px; }
.toggles { display: flex; gap: 4px; margin-left: auto; padding-right: 42px; }
```
